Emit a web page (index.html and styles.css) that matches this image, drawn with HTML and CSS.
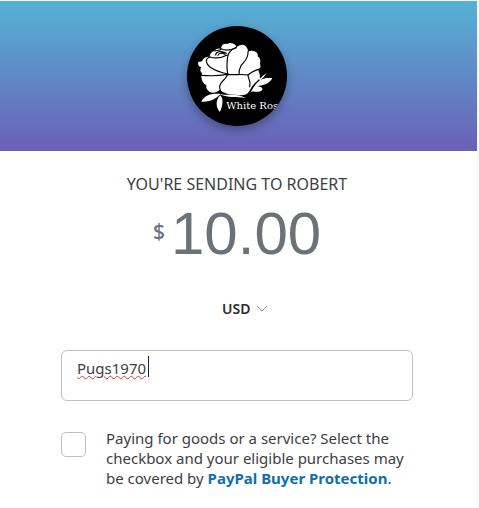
FILE: index.html
```html
<!DOCTYPE html>
<html lang="en">
<head>
  <meta charset="utf-8">
  <meta name="viewport" content="width=device-width, initial-scale=1">
  <title>Send money</title>
  <link rel="stylesheet" href="styles.css">
</head>
<body>
  <main class="page">
    <header class="banner">
      <svg class="avatar" viewBox="30 30 300 300" role="img" aria-label="White Rose">
        <rect x="30" y="30" width="300" height="300" fill="#000"/>
        <!-- Flower -->
        <path fill="#fff" d="M132 98C133 86 142 81 151 84Q159 78 171 84Q178 87 178 94Q190 83 203 88Q213 96 213 107Q223 101 236 107Q244 112 242 121Q253 128 249 144Q254 155 243 160Q250 175 249 188Q236 201 225 211Q218 229 208 235Q194 240 177 236Q151 239 128 222Q113 235 97 227Q86 220 88 208Q74 199 73 183L75 172Q66 164 73 154Q60 149 64 137Q76 139 79 128Q88 121 98 123Q98 109 112 104Q120 95 132 98Z"/>
        <g fill="none" stroke="#000" stroke-width="3.5" stroke-linecap="round">
          <path d="M98 123C82 130 88 145 99 153C116 165 133 170 153 174"/>
          <path d="M98 123C116 128 136 125 151 117M112 105C121 102 130 106 132 98C146 105 158 104 177 96"/>
          <path d="M116 117C116 107 132 103 148 112M123 118C125 110 136 110 144 115"/>
          <path d="M178 94C157 103 152 113 151 130C150 147 148 160 153 176"/>
          <path d="M213 107C215 129 201 136 192 149C187 158 186 166 186 174"/>
          <path d="M73 178C98 180 124 180 151 175C170 178 195 173 213 177C221 169 232 164 244 160"/>
          <path d="M151 175C151 188 132 194 129 207C126 216 129 222 133 229"/>
          <path d="M213 177C213 190 224 197 218 212"/>
        </g>
        <!-- Leaves -->
        <path fill="#fff" d="M73 257C82 238 101 231 131 234C119 245 103 259 73 257ZM130 238C141 251 137 269 129 288C118 278 113 254 130 238ZM127 234C152 240 180 231 206 246C176 242 151 246 127 234ZM214 241C228 218 237 193 269 171C263 180 258 187 251 192C264 184 279 187 286 186C278 203 259 209 239 210C254 211 262 219 252 225C240 231 229 224 222 228Z"/>
        <path fill="none" stroke="#000" stroke-width="4" d="M211 245C219 222 230 205 247 191"/>
        <text x="148" y="279" class="avatar-text">White Ros</text>
      </svg>
    </header>

    <form class="payment">
      <h1 class="title">YOU'RE SENDING TO ROBERT</h1>

      <div class="amount">
        <label class="amount-sign" for="amount">$</label>
        <input class="amount-input" id="amount" type="text" inputmode="decimal" value="10.00">
      </div>

      <div class="currency">
        <select class="currency-select" aria-label="Currency">
          <option>USD</option>
        </select>
        <svg class="currency-arrow" viewBox="0 0 12 8" aria-hidden="true">
          <path d="M1 1L6 6L11 1"/>
        </svg>
      </div>

      <div class="note">
        <textarea class="note-input" aria-label="Add a note" spellcheck="false">Pugs1970</textarea>
        <span class="note-caret"></span>
      </div>

      <div class="protection">
        <input class="protection-check" id="goods" type="checkbox">
        <label class="protection-text" for="goods">Paying for goods or a service? Select the checkbox and your eligible purchases may be covered by <a href="#">PayPal Buyer Protection</a>.</label>
      </div>
    </form>
  </main>
</body>
</html>
```

FILE: styles.css
```css
* {
  margin: 0;
  padding: 0;
  box-sizing: border-box;
}

body {
  background: #fff;
  color: #3c4043;
  font-family: 'Noto Sans', sans-serif;
  font-size: 15px;
}

.page {
  min-height: 100vh;
  padding-top: 1px;
  margin-right: 1px;
  border-right: 1px solid #f3f3f8;
}

/* Banner */
.banner {
  display: flex;
  justify-content: center;
  padding: 25px 4px 25px 0;
  background: linear-gradient(#55b3d5, #6b5fb6);
}

.avatar {
  width: 100px;
  height: 100px;
  border-radius: 50%;
  box-shadow: 0 4px 10px rgba(0, 0, 0, 0.3);
}

.avatar-text {
  fill: #fff;
  font-family: 'DejaVu Serif', serif;
  font-size: 30px;
}

/* Form */
.payment {
  display: flex;
  flex-direction: column;
  align-items: center;
  padding: 23px 64px 0 61px;
}

.title {
  font-size: 16px;
  font-weight: 400;
  line-height: 20px;
  white-space: nowrap;
}

.amount {
  display: flex;
  color: #6c7378;
  margin-top: 4px;
}

.amount-sign {
  padding-top: 18px;
  font-size: 21px;
  font-weight: 500;
  line-height: 30px;
}

.amount-input {
  width: 150px;
  height: 70px;
  margin-left: 6px;
  border: 0;
  outline: 0;
  background: none;
  color: inherit;
  font-family: 'Liberation Sans', sans-serif;
  font-size: 60px;
}

.currency {
  position: relative;
  margin-top: 30px;
  margin-left: 16px;
}

.currency-select {
  display: block;
  width: 46px;
  height: 20px;
  border: 0;
  appearance: none;
  background: none;
  color: #2c2e2f;
  font-family: inherit;
  font-size: 14px;
  font-weight: 600;
}

.currency-arrow {
  position: absolute;
  top: 7px;
  right: 0;
  width: 12px;
  height: 8px;
  fill: none;
  stroke: #8c9296;
  pointer-events: none;
}

/* Note */
.note {
  position: relative;
  width: 100%;
  margin-top: 32px;
}

.note-input {
  display: block;
  width: 100%;
  height: 51px;
  padding: 7px 15px;
  border: 1px solid #bfbfbf;
  border-radius: 6px;
  outline: 0;
  resize: none;
  color: inherit;
  font-family: inherit;
  font-size: 15px;
  line-height: 20px;
  text-decoration: underline wavy #d93a3a 1px;
}

.note-caret {
  position: absolute;
  top: 6px;
  left: 87px;
  width: 1px;
  height: 21px;
  background: #222;
}

/* Buyer protection */
.protection {
  display: flex;
  gap: 20px;
  width: 100%;
  margin-top: 27px;
}

.protection-check {
  flex: none;
  width: 25px;
  height: 25px;
  margin-top: 4px;
  border: 1px solid #bfbfbf;
  border-radius: 5px;
  appearance: none;
  background: #fff;
}

.protection-check:checked {
  background: #0070ba;
}

.protection-text {
  line-height: 20px;
}

.protection-text a {
  color: #0f6fad;
  font-weight: 700;
  text-decoration: none;
}
```
